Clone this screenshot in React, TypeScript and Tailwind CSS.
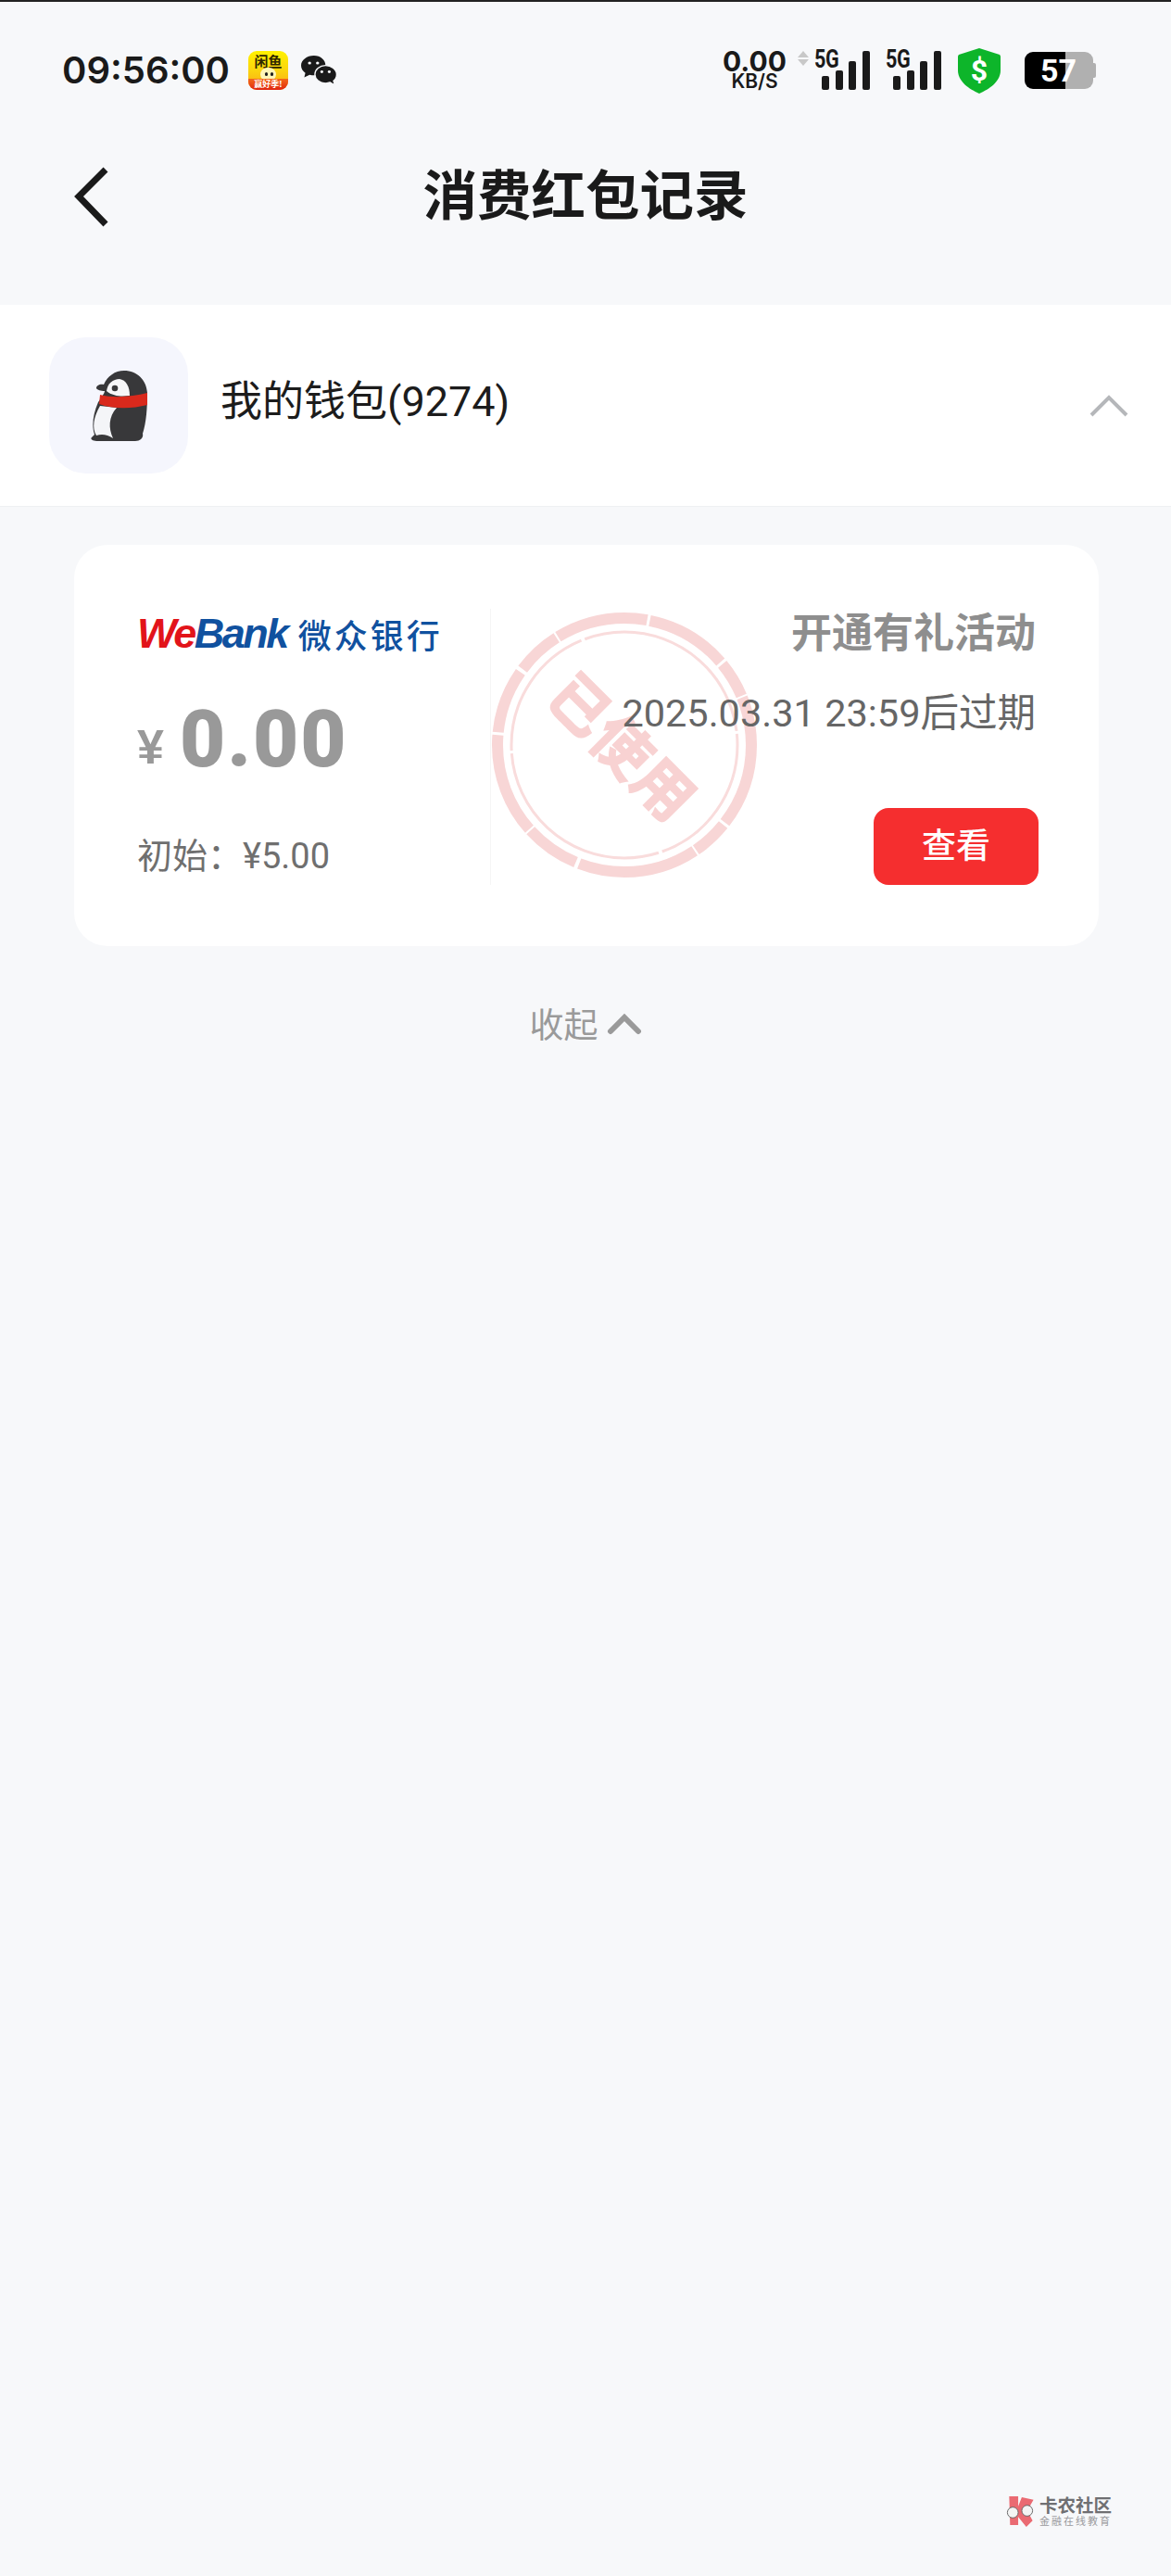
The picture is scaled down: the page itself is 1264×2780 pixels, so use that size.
import React from 'react';

// --- status bar bits ---
function Signal() {
  return (
    <div className="relative flex items-end gap-[6.5px] w-[60px] h-[42px] pl-[8px]">
      <span className="absolute left-0 top-[-3px] origin-left scale-x-[0.8] text-[27px] leading-[24px] font-bold tracking-[-0.5px] text-[#1a1a1a] font-['Roboto',sans-serif]">5G</span>
      <div className="w-[8px] h-[15px] rounded-[2px] bg-[#1a1a1a]" />
      <div className="w-[8px] h-[21px] rounded-[2px] bg-[#1a1a1a]" />
      <div className="w-[8px] h-[31px] rounded-[2px] bg-[#1a1a1a]" />
      <div className="w-[8px] h-[42px] rounded-[2px] bg-[#1a1a1a]" />
    </div>
  );
}

function Shield() {
  return (
    <svg width="46" height="49" viewBox="0 0 46 49">
      <path d="M23 0 L45 7 C46 8 46 9 46 10 V24 C46 36 34 44 23 49 C12 44 0 36 0 24 V10 C0 9 0 8 1 7 Z" fill="#0db52a" />
      <text x="23" y="35" textAnchor="middle" fontSize="32" fontWeight="700" fill="#fff" fontFamily="Roboto, sans-serif">$</text>
    </svg>
  );
}

function Battery() {
  return (
    <div className="relative w-[77px] h-[40px]">
      <div className="flex w-[74px] h-[40px] rounded-[9px] overflow-hidden">
        <div className="w-[44px] bg-black" />
        <div className="flex-1 bg-[#b0b0b0]" />
      </div>
      <div className="absolute right-0 top-[12px] w-[3px] h-[16px] rounded-r-[2px] bg-[#b0b0b0]" />
      <span className="absolute left-[17px] top-0 leading-[40px] text-[34px] font-bold text-white font-['Roboto',sans-serif]">57</span>
    </div>
  );
}

function WeChatGlyph() {
  return (
    <svg width="39" height="33" viewBox="0 0 34 31" preserveAspectRatio="none">
      <path d="M12 0 C5.500 0 0 4.500 0 10 C0 13 1.500 15.500 4 17.500 L3 22 L8 19.500 C9.500 20 11 20 12 20 C18.500 20 23 15.500 23 10 C23 4.500 18.500 0 12 0 Z" fill="#1a1a1a" />
      <circle cx="8" cy="7.500" r="1.500" fill="#f7f8fa" />
      <circle cx="15.500" cy="7.500" r="1.500" fill="#f7f8fa" />
      <path d="M23 10 C17.500 10 13 14 13 19 C13 24 17.500 28 23 28 C24.500 28 25.500 27.500 27 27 L32 30 L30.500 25.500 C32.500 24 33.500 21.500 33.500 19 C33.500 14 28.500 10 23 10 Z" fill="#1a1a1a" stroke="#f7f8fa" strokeWidth="1.200" />
      <circle cx="19.500" cy="16.500" r="1.400" fill="#f7f8fa" />
      <circle cx="26.500" cy="16.500" r="1.400" fill="#f7f8fa" />
    </svg>
  );
}

function XianyuIcon() {
  return (
    <div className="relative w-[43px] h-[42px] rounded-[9px] overflow-hidden bg-gradient-to-b from-[#fff200] via-[#fbd40e] to-[#f7a516]">
      <span className="absolute left-0 right-0 top-[3px] text-center text-[15px] leading-[16px] font-bold text-[#2e2600] font-['Noto_Sans_CJK_SC',sans-serif]">闲鱼</span>
      <div className="absolute left-[13px] top-[18px] w-[17px] h-[15px] rounded-full bg-[#fff6b8]" />
      <div className="absolute left-[18px] top-[23px] w-[3px] h-[4px] rounded-full bg-[#222]" />
      <div className="absolute left-[24px] top-[23px] w-[3px] h-[4px] rounded-full bg-[#222]" />
      <div className="absolute left-0 right-0 bottom-0 h-[12px] bg-gradient-to-b from-[#f4671a] to-[#e0200f]" />
      <span className="absolute left-0 right-0 bottom-0 text-center text-[9px] leading-[12px] font-bold text-white font-['Noto_Sans_CJK_SC',sans-serif]">赢好季!</span>
    </div>
  );
}

function Penguin() {
  return (
    <svg width="61" height="76" viewBox="0 0 61 76">
      <path d="M36 0 C50 0 60 10 61 24 C61 40 60 56 56 68 C57 72 54 76 48 76 L8 76 C2 76 -1 74 1 72 L4 69 C1 60 2 48 8 34 C11 30 15 24 15 22 C11 22 7 21 6 19 C6 16 10 14 14 15 C18 6 26 0 36 0 Z" fill="#38383a" />
      <path d="M17 22 C18 14 24 9 31 9 C38 10 42 17 42 27 C34 28 24 28 17 22 Z" fill="#f6f6f8" />
      <circle cx="26" cy="19" r="3.300" fill="#38383a" />
      <path d="M10 38 C3 50 1 62 6 70 C12 68 18 69 24 73 C19 62 19 50 28 40 Z" fill="#f4f5f8" />
      <path d="M10 26 C25 30 45 28 61 24 L61 37 C45 41 25 42 9 36 Z" fill="#d9291c" />
    </svg>
  );
}

function Stamp() {
  return (
    <div className="absolute left-[449px] top-[71px] w-[290px] h-[290px]">
      <svg width="290" height="290" viewBox="0 0 290 290" className="absolute inset-0">
        <circle cx="145" cy="145" r="137" fill="none" stroke="#f8d6d6" strokeWidth="12" strokeDasharray="90 3 40 2 130 4 60 2 110 3 70 4 50 2 100 3" />
        <circle cx="145" cy="145" r="122" fill="none" stroke="#f9dcdc" strokeWidth="3" strokeDasharray="150 4 220 3" />
      </svg>
      <span className="absolute left-0 top-[113px] w-[290px] text-center rotate-[45deg] text-[64px] leading-[63px] font-black text-[#f8d2d2] font-['Noto_Sans_CJK_SC',sans-serif] whitespace-nowrap">
        已使用
      </span>
    </div>
  );
}

function WeBankLogo() {
  return (
    <div className="flex items-center h-[40px] whitespace-nowrap">
      <span className="text-[45px] leading-[40px] font-bold italic tracking-[-2.500px] font-['Liberation_Sans',sans-serif]">
        <span className="text-[#e2141a]">We</span>
        <span className="text-[#10519f]">Bank</span>
      </span>
      <span className="ml-[12px] text-[36px] leading-[40px] font-medium tracking-[3px] text-[#10519f] font-['Noto_Sans_CJK_SC',sans-serif]">微众银行</span>
    </div>
  );
}

function KanongMark() {
  return (
    <div className="flex items-center gap-[4px]">
      <svg width="34" height="35" viewBox="0 0 34 36">
        <path d="M5 1 H15 V12 L19 2 L32 5 L25 17 L31 28 L24 35 L15 24 V33 H6 Z" fill="#ea6a72" />
        <circle cx="9" cy="19" r="6" fill="#f4f4f4" stroke="#666" strokeWidth="1" />
        <circle cx="25" cy="17" r="6" fill="#f4f4f4" stroke="#666" strokeWidth="1" />
      </svg>
      <div className="flex flex-col font-['Noto_Sans_CJK_SC',sans-serif]">
        <span className="text-[19.500px] leading-[20px] font-bold text-[#6f6f72]">卡农社区</span>
        <span className="text-[11px] leading-[15px] text-[#9a9a9d] tracking-[2px]">金融在线教育</span>
      </div>
    </div>
  );
}

export default function App() {
  return (
    <div className="relative w-[1264px] h-[2780px] overflow-hidden bg-[#f7f8fa] font-['Roboto','Noto_Sans_CJK_SC',sans-serif]">
      <div className="h-[2px] bg-[#222]" />

      {/* status bar */}
      <div className="flex items-center justify-between h-[50px] mt-[49px] pl-[67px] pr-[81px]">
        <div className="flex items-center">
          <span className="text-[40px] leading-[50px] font-semibold text-[#1a1a1a] font-['Inter',sans-serif]">09:56:00</span>
          <div className="ml-[20px]"><XianyuIcon /></div>
          <div className="ml-[14px]"><WeChatGlyph /></div>
        </div>
        <div className="flex items-center">
          <div className="flex flex-col items-center w-[69px] font-['Inter',sans-serif] text-[#1a1a1a]">
            <span className="text-[30px] leading-[22px] font-bold">0.00</span>
            <span className="mt-[2px] text-[21px] leading-[18px] font-semibold">KB/S</span>
          </div>
          <div className="flex flex-col gap-[2px] ml-[12px] mr-[6px] mt-[-26px]">
            <div className="w-0 h-0 border-x-[6px] border-x-transparent border-b-[7px] border-b-[#c8c8c8]" />
            <div className="w-0 h-0 border-x-[6px] border-x-transparent border-t-[7px] border-t-[#c8c8c8]" />
          </div>
          <Signal />
          <div className="ml-[17px]"><Signal /></div>
          <div className="ml-[18px]"><Shield /></div>
          <div className="ml-[26px]"><Battery /></div>
        </div>
      </div>

      {/* title bar */}
      <div className="grid grid-cols-[1fr_auto_1fr] items-center h-[64px] mt-[76px]">
        <div className="pl-[78px]">
          <svg width="42" height="70" viewBox="0 0 42 70" className="block">
            <path d="M36 6 L7 35 L36 65" fill="none" stroke="#1a1a1a" strokeWidth="7" />
          </svg>
        </div>
        <h1 className="text-[58.500px] leading-[64px] font-bold text-[#1a1a1a]">消费红包记录</h1>
        <div />
      </div>

      {/* wallet row */}
      <div className="flex items-center justify-between h-[218px] mt-[88px] bg-white border-b border-[#eef0f2] pl-[53px] pr-[45px]">
        <div className="flex items-center">
          <div className="flex items-center justify-center w-[150px] h-[147px] rounded-[40px] bg-[#f5f6fd]">
            <Penguin />
          </div>
          <span className="ml-[35px] mt-[-8px] text-[45px] leading-[56px] text-[#1c1c1c]">我的钱包(9274)</span>
        </div>
        <svg width="44" height="26" viewBox="0 0 44 26">
          <path d="M3 23 L22 4 L41 23" fill="none" stroke="#b5b7ba" strokeWidth="4" />
        </svg>
      </div>

      {/* coupon card */}
      <div className="relative flex h-[433px] mt-[41px] ml-[80px] mr-[78px] rounded-[36px] bg-white">
        <Stamp />
        <div className="w-[449px] pl-[68px] pt-[76px]">
          <WeBankLogo />
          <div className="flex items-baseline mt-[59px] text-[#999]">
            <span className="-translate-y-[3px] text-[52px] leading-[70px] font-bold font-['Liberation_Sans',sans-serif]">¥</span>
            <span className="ml-[17px] text-[85px] leading-[70px] font-black tracking-[2px] font-['Roboto',sans-serif]">0.00</span>
          </div>
          <div className="mt-[55px] text-[38px] leading-[50px] text-[#6f6f6f]">初始：¥5.00</div>
        </div>
        <div className="w-px h-[298px] mt-[69px] bg-[#f5f5f5]" />
        <div className="relative flex-1 flex flex-col items-end pr-[68px] pt-[66px]">
          <div className="text-[44px] leading-[60px] font-bold text-[#8e8e8e]">开通有礼活动</div>
          <div className="mt-[28px] text-[41.500px] leading-[56px] text-[#666] whitespace-nowrap">2025.03.31 23:59后过期</div>
          <button className="flex items-center justify-center w-[178px] h-[83px] mt-[74px] mr-[-3px] rounded-[16px] bg-[#f52e2f] text-[37px] font-medium text-white">查看</button>
        </div>
      </div>

      {/* collapse */}
      <div className="flex items-center justify-center mt-[62px] text-[37px] leading-[50px] text-[#9a9a9a]">
        <span>收起</span>
        <svg width="38" height="24" viewBox="0 0 38 24" className="ml-[9px] mt-[-6px]">
          <path d="M4 20 L19 5 L34 20" fill="none" stroke="#9a9a9a" strokeWidth="6" strokeLinecap="round" />
        </svg>
      </div>

      {/* watermark */}
      <div className="absolute left-[1084px] top-[2693px]">
        <KanongMark />
      </div>
    </div>
  );
}
